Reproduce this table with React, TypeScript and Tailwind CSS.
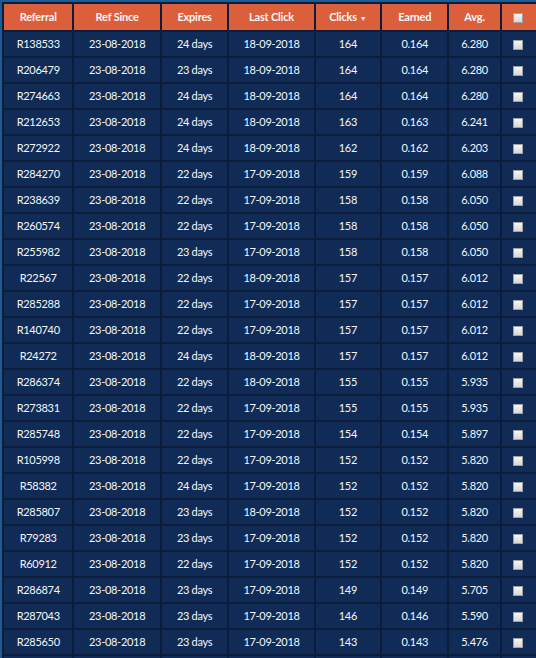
import React from 'react';

type Row = [string, string, string, string, number, string, string];

const rows: Row[] = [
  ['R138533', '23-08-2018', '24 days', '18-09-2018', 164, '0.164', '6.280'],
  ['R206479', '23-08-2018', '23 days', '18-09-2018', 164, '0.164', '6.280'],
  ['R274663', '23-08-2018', '24 days', '18-09-2018', 164, '0.164', '6.280'],
  ['R212653', '23-08-2018', '24 days', '18-09-2018', 163, '0.163', '6.241'],
  ['R272922', '23-08-2018', '24 days', '18-09-2018', 162, '0.162', '6.203'],
  ['R284270', '23-08-2018', '22 days', '17-09-2018', 159, '0.159', '6.088'],
  ['R238639', '23-08-2018', '22 days', '17-09-2018', 158, '0.158', '6.050'],
  ['R260574', '23-08-2018', '22 days', '17-09-2018', 158, '0.158', '6.050'],
  ['R255982', '23-08-2018', '23 days', '17-09-2018', 158, '0.158', '6.050'],
  ['R22567', '23-08-2018', '22 days', '18-09-2018', 157, '0.157', '6.012'],
  ['R285288', '23-08-2018', '22 days', '17-09-2018', 157, '0.157', '6.012'],
  ['R140740', '23-08-2018', '22 days', '17-09-2018', 157, '0.157', '6.012'],
  ['R24272', '23-08-2018', '24 days', '18-09-2018', 157, '0.157', '6.012'],
  ['R286374', '23-08-2018', '22 days', '18-09-2018', 155, '0.155', '5.935'],
  ['R273831', '23-08-2018', '22 days', '17-09-2018', 155, '0.155', '5.935'],
  ['R285748', '23-08-2018', '22 days', '17-09-2018', 154, '0.154', '5.897'],
  ['R105998', '23-08-2018', '22 days', '17-09-2018', 152, '0.152', '5.820'],
  ['R58382', '23-08-2018', '24 days', '17-09-2018', 152, '0.152', '5.820'],
  ['R285807', '23-08-2018', '23 days', '18-09-2018', 152, '0.152', '5.820'],
  ['R79283', '23-08-2018', '23 days', '17-09-2018', 152, '0.152', '5.820'],
  ['R60912', '23-08-2018', '22 days', '17-09-2018', 152, '0.152', '5.820'],
  ['R286874', '23-08-2018', '23 days', '17-09-2018', 149, '0.149', '5.705'],
  ['R287043', '23-08-2018', '23 days', '17-09-2018', 146, '0.146', '5.590'],
  ['R285650', '23-08-2018', '23 days', '17-09-2018', 143, '0.143', '5.476'],
];

const widths = ['w-[70px]', 'w-[87px]', 'w-[67px]', 'w-[86px]', 'w-[66px]', 'w-[67px]', 'w-[52px]', 'w-[40px]'];

const Check = () => (
  <span className="inline-block w-[10px] h-[10px] align-middle border border-[#a0a0a0] bg-gradient-to-b from-[#f6f6f6] to-[#d8d8d8]" />
);

const App: React.FC = () => {
  const headers = ['Referral', 'Ref Since', 'Expires', 'Last Click', 'Clicks', 'Earned', 'Avg.'];

  return (
    <div className="w-[536px] h-[658px] overflow-hidden bg-[#1d5b94] pt-[2px] pl-[2px] font-['Lato',sans-serif]">
      <table className="table-fixed border-collapse w-[540px] text-[11px] tracking-[-0.3px] text-[#f4f7fb] text-center">
        <thead>
          <tr className="h-[28px] bg-[#dc5f3c]">
            {headers.map((h, i) => (
              <th key={h} className={`${widths[i]} border-2 border-[#0b1d3a] font-bold tracking-[-0.2px] p-0`}>
                {h}
                {h === 'Clicks' && <span className="ml-[3px] text-[7px] align-middle">▼</span>}
              </th>
            ))}
            <th className={`${widths[7]} border-2 border-[#0b1d3a] p-0 pr-[6px]`}>
              <Check />
            </th>
          </tr>
        </thead>
        <tbody className="bg-[#102b56]">
          {rows.map((r) => (
            <tr key={r[0]} className="h-[26px]">
              {r.map((c, i) => (
                <td key={i} className="border-2 border-[#0b1d3a] p-0">
                  {c}
                </td>
              ))}
              <td className="border-2 border-[#0b1d3a] p-0 pr-[6px]">
                <Check />
              </td>
            </tr>
          ))}
          <tr className="h-[26px]">
            {widths.map((w) => (
              <td key={w} className="border-2 border-[#0b1d3a] p-0" />
            ))}
          </tr>
        </tbody>
      </table>
    </div>
  );
};

export default App;
